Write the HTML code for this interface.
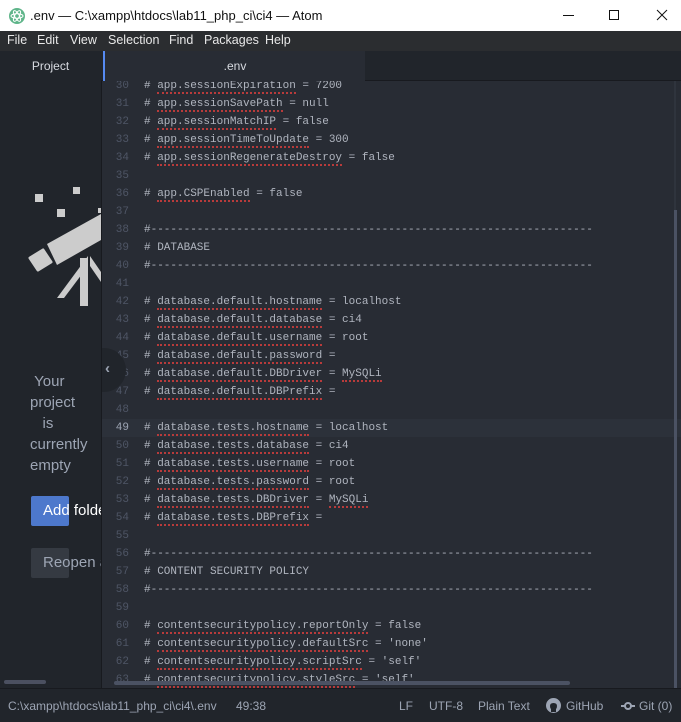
<!DOCTYPE html>
<html><head><meta charset="utf-8"><style>
*{margin:0;padding:0;box-sizing:border-box}
body{width:681px;height:722px;overflow:hidden;background:#21252b;font-family:"Liberation Sans",sans-serif;position:relative}
.title{position:absolute;left:0;top:0;width:681px;height:31px;background:#fff;color:#111;font-size:13px}
.menu{position:absolute;left:0;top:31px;width:681px;height:20px;background:#2b2d30;color:#e8e8e8;font-size:12.5px}
.menu span{position:absolute;top:2px}
.left{position:absolute;left:0;top:51px;width:101px;height:637px;background:#21252b;overflow:hidden}
.tabs{position:absolute;left:101px;top:51px;width:580px;height:30px;background:#21252b;border-bottom:1px solid #181a1f}
.tab{position:absolute;left:2px;top:0;width:262px;height:30px;background:#282c34;color:#d7dae0;font-size:12px;text-align:center;line-height:31px;border-left:2px solid #568af2}
.ed{position:absolute;left:101px;top:81px;width:580px;height:607px;background:#282c34;overflow:hidden;border-left:1px solid #181a1f}
.ln{position:absolute;left:0;height:18px;width:580px;font-family:"Liberation Mono",monospace;font-size:11px;line-height:18px;color:#b0b5bf;white-space:pre}
.ln .n{position:absolute;left:0;width:27px;text-align:right;color:#4f5666}
.ln .t{position:absolute;left:42px}
.ln.cur{background:#2c313a}
.ln.cur .n{color:#9da5b4}
u{text-decoration:none;border-bottom:2px dotted #b83b3b}
.status{position:absolute;left:0;top:688px;width:681px;height:34px;background:#21252b;border-top:1px solid #181a1f;color:#9da5b4;font-size:12px}
.status span{position:absolute;top:10px}
</style></head><body>
<div class="title">
<svg style="position:absolute;left:9px;top:8px" width="16" height="16"><circle cx="8" cy="8" r="8" fill="#5fb58a"/><ellipse cx="8" cy="8" rx="6" ry="2.3" fill="none" stroke="#fff" stroke-width="1"/><ellipse cx="8" cy="8" rx="6" ry="2.3" fill="none" stroke="#fff" stroke-width="1" transform="rotate(60 8 8)"/><ellipse cx="8" cy="8" rx="6" ry="2.3" fill="none" stroke="#fff" stroke-width="1" transform="rotate(-60 8 8)"/></svg>
<span style="position:absolute;left:30px;top:8px">.env — C:\xampp\htdocs\lab11_php_ci\ci4 — Atom</span>
<svg style="position:absolute;left:560px;top:8px" width="110" height="16" stroke="#111" fill="none" stroke-width="1"><path d="M3 7.5H14"/><rect x="49.5" y="2.5" width="9" height="9"/><path d="M97 2L107 12M107 2L97 12"/></svg>
</div>
<div class="menu"><span style="left:7px">File</span><span style="left:37px">Edit</span><span style="left:70px">View</span><span style="left:108px">Selection</span><span style="left:169px">Find</span><span style="left:204px">Packages</span><span style="left:265px">Help</span></div>
<div class="left">
<div style="position:absolute;left:0;top:0;width:101px;height:30px;color:#d7dae0;font-size:12px;text-align:center;line-height:31px;background:#21252b">Project</div>
<svg style="position:absolute;left:0;top:-51px" width="101" height="400" fill="#cccccc">
<rect x="35" y="194" width="8" height="8"/><rect x="73" y="187" width="7" height="7"/><rect x="57" y="209" width="8" height="8"/><rect x="98" y="208" width="3" height="5"/>
<polygon points="47,244 101,214 101,240 57,265"/>
<polygon points="30,258 43,250 51,262 38,270" stroke="#cccccc" stroke-width="3" stroke-linejoin="round"/>
<polygon points="88,256 57,298 64,298 88,266"/>
<rect x="80" y="258" width="8" height="48"/>
<polygon points="90,256 101,272 101,282 90,266"/>
</svg>
<div style="position:absolute;left:30px;top:320px;color:#9da5b4;font-size:15px;line-height:21px">&nbsp;Your<br>project<br>&nbsp;&nbsp;&nbsp;is<br>currently<br>empty</div>
<div style="position:absolute;left:31px;top:445px;width:38px;height:30px;background:#4d78cc;border-radius:2px"></div>
<div style="position:absolute;left:43px;top:451px;color:#fff;font-size:15px;white-space:nowrap">Add folder</div>
<div style="position:absolute;left:31px;top:497px;width:38px;height:30px;background:#353a42;border-radius:2px"></div>
<div style="position:absolute;left:43px;top:503px;color:#9da5b4;font-size:15px;white-space:nowrap">Reopen a</div>
<div style="position:absolute;left:4px;top:629px;width:42px;height:4px;background:#4b5060;border-radius:2px"></div>
</div>
<div class="tabs"><div class="tab">.env</div></div>
<div class="ed">
<div id="code"></div>
<div style="position:absolute;left:-20px;top:267px;width:44px;height:44px;border-radius:22px;background:#21252b"></div>
<div style="position:absolute;left:3px;top:279px;color:#9da5b4;font-size:15px;font-weight:bold">‹</div>
<div style="position:absolute;left:572px;top:0;width:2px;height:607px;background:#2f343d"></div>
<div style="position:absolute;left:572px;top:129px;width:3px;height:478px;background:#4b5263"></div>
<div style="position:absolute;left:12px;top:600px;width:456px;height:4px;background:#4b5263;border-radius:2px"></div>
</div>
<div class="status">
<span style="left:8px">C:\xampp\htdocs\lab11_php_ci\ci4\.env</span><span style="left:236px">49:38</span>
<span style="left:399px">LF</span><span style="left:429px">UTF-8</span><span style="left:478px">Plain Text</span>
<svg style="position:absolute;left:546px;top:9px" width="15" height="15"><circle cx="7.5" cy="7.5" r="7.5" fill="#9da5b4"/><path d="M5 14V11Q4 10 4 8Q4 5 7.5 5Q11 5 11 8Q11 10 10 11V14Z" fill="#21252b"/></svg>
<span style="left:566px">GitHub</span>
<svg style="position:absolute;left:621px;top:12px" width="14" height="10"><path d="M0 5H14" stroke="#9da5b4" stroke-width="2"/><circle cx="7" cy="5" r="3" fill="#21252b" stroke="#9da5b4" stroke-width="2"/></svg>
<span style="left:639px">Git (0)</span>
</div>
<script>
const D='#'+'-'.repeat(67);
const L=[
[30,'# <u>app.sessionExpiration</u> = 7200'],
[31,'# <u>app.sessionSavePath</u> = null'],
[32,'# <u>app.sessionMatchIP</u> = false'],
[33,'# <u>app.sessionTimeToUpdate</u> = 300'],
[34,'# <u>app.sessionRegenerateDestroy</u> = false'],
[35,''],[36,'# <u>app.CSPEnabled</u> = false'],[37,''],
[38,D],[39,'# DATABASE'],[40,D],[41,''],
[42,'# <u>database.default.hostname</u> = localhost'],
[43,'# <u>database.default.database</u> = ci4'],
[44,'# <u>database.default.username</u> = root'],
[45,'# <u>database.default.password</u> ='],
[46,'# <u>database.default.DBDriver</u> = <u>MySQLi</u>'],
[47,'# <u>database.default.DBPrefix</u> ='],[48,''],
[49,'# <u>database.tests.hostname</u> = localhost'],
[50,'# <u>database.tests.database</u> = ci4'],
[51,'# <u>database.tests.username</u> = root'],
[52,'# <u>database.tests.password</u> = root'],
[53,'# <u>database.tests.DBDriver</u> = <u>MySQLi</u>'],
[54,'# <u>database.tests.DBPrefix</u> ='],[55,''],
[56,D],[57,'# CONTENT SECURITY POLICY'],[58,D],[59,''],
[60,'# <u>contentsecuritypolicy.reportOnly</u> = false'],
[61,'# <u>contentsecuritypolicy.defaultSrc</u> = \'none\''],
[62,'# <u>contentsecuritypolicy.scriptSrc</u> = \'self\''],
[63,'# <u>contentsecuritypolicy.styleSrc</u> = \'self\'']];
let h='';L.forEach((l,i)=>{h+=`<div class="ln${l[0]==49?' cur':''}" style="top:${i*18-4}px"><span class="n">${l[0]}</span><span class="t">${l[1]}</span></div>`});
document.getElementById('code').innerHTML=h;
</script>
</body></html>
